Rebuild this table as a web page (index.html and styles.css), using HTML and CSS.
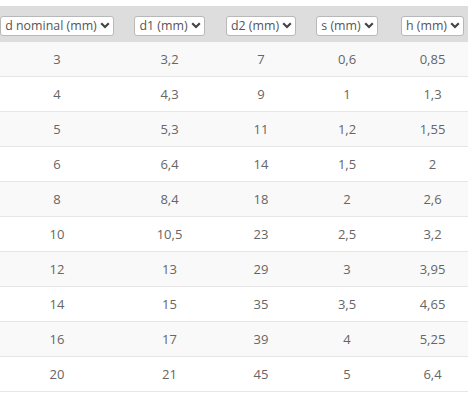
FILE: index.html
```html
<!DOCTYPE html>
<html>
<head>
<meta charset="utf-8">
<link rel="stylesheet" href="styles.css">
</head>
<body>
<table class="tbl">
  <colgroup>
    <col class="c1"><col class="c2"><col class="c3"><col class="c4"><col class="c5">
  </colgroup>
  <thead>
    <tr>
      <th><span class="sel">d nominal (mm)<svg class="chev" viewBox="0 0 10 7"><path d="M1.2 1.3 L5 5 L8.8 1.3"/></svg></span></th>
      <th><span class="sel">d1 (mm)<svg class="chev" viewBox="0 0 10 7"><path d="M1.2 1.3 L5 5 L8.8 1.3"/></svg></span></th>
      <th><span class="sel">d2 (mm)<svg class="chev" viewBox="0 0 10 7"><path d="M1.2 1.3 L5 5 L8.8 1.3"/></svg></span></th>
      <th><span class="sel">s (mm)<svg class="chev" viewBox="0 0 10 7"><path d="M1.2 1.3 L5 5 L8.8 1.3"/></svg></span></th>
      <th><span class="sel">h (mm)<svg class="chev" viewBox="0 0 10 7"><path d="M1.2 1.3 L5 5 L8.8 1.3"/></svg></span></th>
    </tr>
  </thead>
  <tbody>
    <tr><td>3</td><td>3,2</td><td>7</td><td>0,6</td><td>0,85</td></tr>
    <tr><td>4</td><td>4,3</td><td>9</td><td>1</td><td>1,3</td></tr>
    <tr><td>5</td><td>5,3</td><td>11</td><td>1,2</td><td>1,55</td></tr>
    <tr><td>6</td><td>6,4</td><td>14</td><td>1,5</td><td>2</td></tr>
    <tr><td>8</td><td>8,4</td><td>18</td><td>2</td><td>2,6</td></tr>
    <tr><td>10</td><td>10,5</td><td>23</td><td>2,5</td><td>3,2</td></tr>
    <tr><td>12</td><td>13</td><td>29</td><td>3</td><td>3,95</td></tr>
    <tr><td>14</td><td>15</td><td>35</td><td>3,5</td><td>4,65</td></tr>
    <tr><td>16</td><td>17</td><td>39</td><td>4</td><td>5,25</td></tr>
    <tr><td>20</td><td>21</td><td>45</td><td>5</td><td>6,4</td></tr>
  </tbody>
</table>
</body>
</html>
```
FILE: styles.css
```css
html, body {
  margin: 0;
  padding: 0;
  background: #fff;
}
body {
  padding-top: 6px;
  font-family: "Open Sans", "Liberation Sans", sans-serif;
}
.tbl {
  width: 468px;
  border-collapse: collapse;
  table-layout: fixed;
}
.c1 { width: 114px; }
.c2 { width: 111px; }
.c3 { width: 72px; }
.c4 { width: 100px; }
.c5 { width: 71px; }
.tbl th {
  background: #dddddd;
  height: 36px;
  padding: 0;
  text-align: center;
  vertical-align: middle;
  font-weight: normal;
}
.sel {
  display: inline-flex;
  align-items: center;
  gap: 3px;
  height: 18px;
  padding: 0 3px 0 4px;
  background: #fff;
  border: 1px solid #b8b8b8;
  border-radius: 3px;
  font-size: 12.4px;
  color: #555;
  white-space: nowrap;
  line-height: 18px;
}
.chev {
  width: 10px;
  height: 7px;
  fill: none;
  stroke: #444;
  stroke-width: 2.2;
}
.tbl td {
  height: 34px;
  padding: 0;
  text-align: center;
  vertical-align: middle;
  font-size: 13px;
  color: #666;
  border-bottom: 1px solid #e6e6e6;
}
.tbl tbody tr:nth-child(odd) td {
  background: #f9f9f9;
}
```
